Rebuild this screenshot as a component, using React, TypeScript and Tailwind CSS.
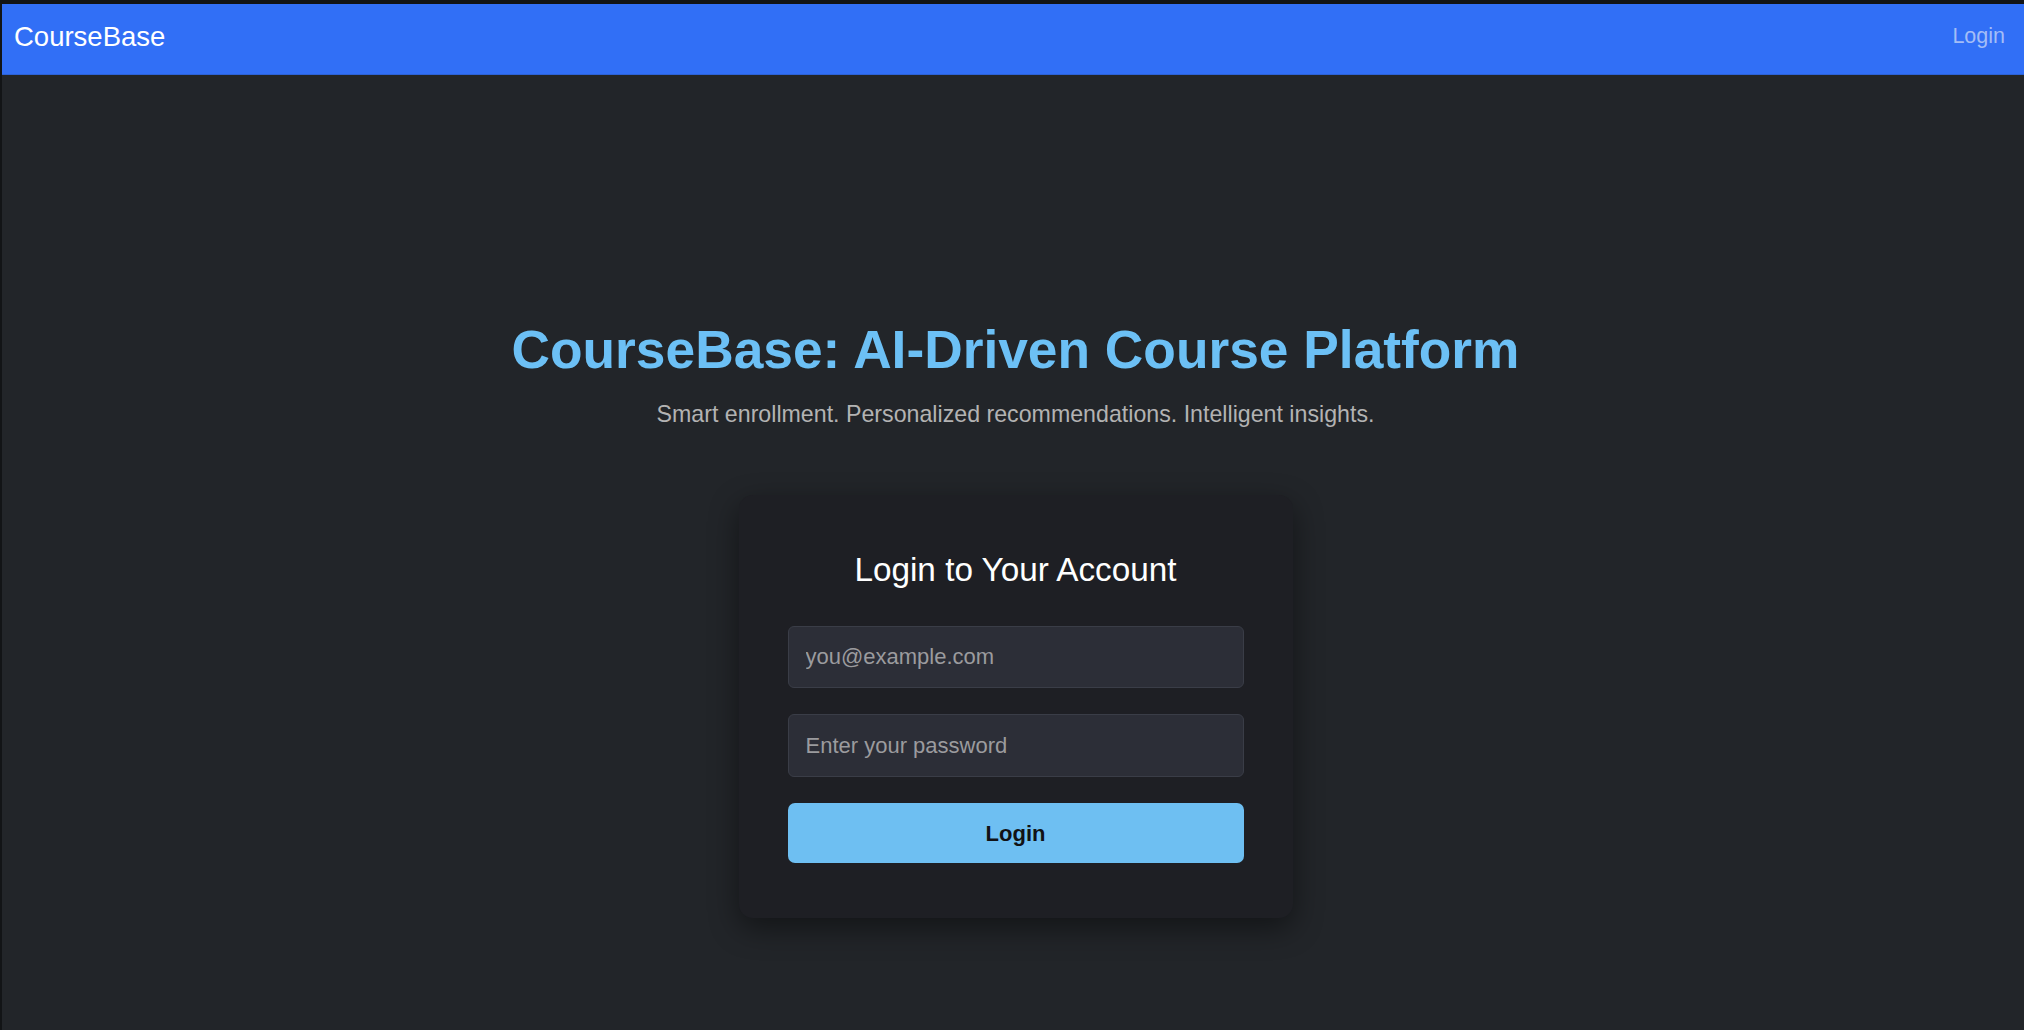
import React from "react";

export default function App() {
  return (
    <div
      className="min-h-[1030px] bg-[#222529] border-t-4 border-l-2 border-[#121416] flex flex-col"
      style={{ fontFamily: '"Liberation Sans", Arial, Helvetica, sans-serif' }}
    >
      <nav className="h-[71px] bg-[#316ff6] border-b border-[#2c62d6] flex items-center justify-between pl-3 pr-[19px] pb-[5px]">
        <a href="#" className="text-[27.5px] text-white">
          CourseBase
        </a>
        <a href="#" className="text-[21.5px] text-[#a3bdf7]">
          Login
        </a>
      </nav>

      <main className="flex flex-col items-center pt-[243px] pl-[5px]">
        <h1 className="text-[53.3px] leading-[64px] font-bold text-[#6cc0f5]">
          CourseBase: AI-Driven Course Platform
        </h1>
        <p className="mt-4 text-[23.2px] leading-8 text-[#b3b3b3]">
          Smart enrollment. Personalized recommendations. Intelligent insights.
        </p>

        <div className="mt-[65px] w-[554px] rounded-[14px] bg-[#1e1f24] px-[49px] pt-[55px] pb-[55px] shadow-[0_10px_30px_rgba(0,0,0,0.45)]">
          <h2 className="text-center text-[33.3px] leading-10 text-white">
            Login to Your Account
          </h2>
          <form className="mt-9 flex flex-col gap-[26px]" onSubmit={(e) => e.preventDefault()}>
            <input
              type="email"
              placeholder="you@example.com"
              className="h-[62px] w-full rounded-md border border-[#3a3d47] bg-[#2c2e37] px-[17px] text-[22px] text-white placeholder:text-[#9b9b9e] focus:outline-none"
            />
            <input
              type="password"
              placeholder="Enter your password"
              className="h-[63px] w-full rounded-md border border-[#3a3d47] bg-[#2c2e37] px-[17px] text-[22px] text-white placeholder:text-[#9b9b9e] focus:outline-none"
            />
            <button
              type="submit"
              className="h-[60px] w-full rounded-[7px] bg-[#6ebff2] text-[22px] font-bold text-[#111215]"
            >
              Login
            </button>
          </form>
        </div>
      </main>
    </div>
  );
}
